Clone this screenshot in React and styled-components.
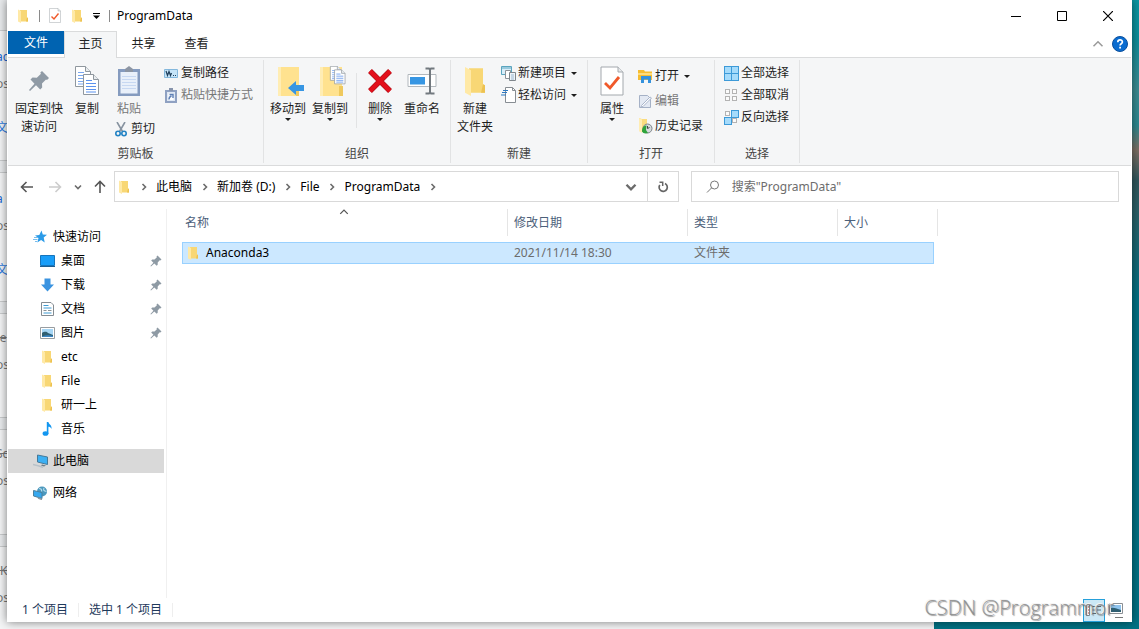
import React from 'react';

import styled, { createGlobalStyle } from 'styled-components';

const GlobalStyle = createGlobalStyle`
	* {
		box-sizing: border-box;
	}
	body {
		margin: 0;
		font-family: 'Noto Sans', 'Noto Sans CJK SC', sans-serif;
		font-size: 12px;
		line-height: 18px;
		color: #000;
	}
	button,
	input {
		font: inherit;
		color: inherit;
		margin: 0;
		padding: 0;
		border: 0;
		background: none;
	}
	a {
		color: inherit;
		text-decoration: none;
	}
	svg {
		display: block;
		flex: none;
	}
`;

/* ---------- desktop ---------- */

const Desktop = styled.div`
	position: relative;
	display: flex;
	min-height: 100vh;
	padding: 0 7px 7px;
	overflow: hidden;
	background: linear-gradient(
		180deg,
		#0a97a3 0,
		#0d8f9b 40px,
		#3d8c92 90px,
		#2d8990 125px,
		#7d6f63 150px,
		#31575d 180px,
		#2b6067 210px,
		#007083 300px,
		#007284 100%
	);
`;

const BackPage = styled.div`
	position: absolute;
	top: 0;
	left: 0;
	bottom: 0;
	width: 82%;
	padding-top: 31px;
	background: #e9ebed;
	overflow: hidden;
`;

const BackCard = styled.div`
	height: ${({ $height }) => $height}px;
	margin-bottom: 13px;
	padding-top: ${({ $tight }) => ($tight ? 14 : 16)}px;
	text-indent: -4px;
	background: #f4f5f6;
	box-shadow: 0 0 0 1px #c9cbcd;
	color: #777;
`;

const BackLine = styled.p`
	margin: 0 0 7px;
	line-height: 20px;
	font-size: 12px;
	color: ${({ $link }) => ($link ? '#1a67d2' : 'inherit')};
	text-decoration: ${({ $struck }) => ($struck ? 'line-through' : 'none')};
`;

const BackTag = styled.p`
	margin: 0;
	padding-top: 17px;
	line-height: 20px;
	font-size: 12px;
	color: #2f7be0;
`;

const Window = styled.main`
	position: relative;
	flex: 1;
	min-width: 0;
	display: flex;
	flex-direction: column;
	background: #fff;
	border: solid #fff;
	border-width: 0 1px;
	box-shadow: 0 0 9px rgba(0, 0, 0, 0.5);
`;

/* ---------- title bar and tabs ---------- */

const TitleBar = styled.header`
	display: flex;
	align-items: center;
	height: 31px;
	padding-left: 3px;
`;

const QuickButton = styled.button`
	display: flex;
	align-items: center;
	justify-content: center;
	width: ${({ $width }) => $width || 22}px;
	height: 22px;
`;

const TitleRule = styled.span`
	width: 1px;
	height: 12px;
	margin: 0 4px;
	background: #8a8a8a;
`;

const Title = styled.h1`
	flex: 1;
	margin: 0 0 0 3px;
	font-size: 12px;
	font-weight: 400;
`;

const CaptionButton = styled.button`
	display: flex;
	align-items: center;
	justify-content: center;
	width: 46px;
	height: 31px;
`;

const TabBar = styled.nav`
	display: flex;
	height: 27px;
	border-bottom: 1px solid #dadbdc;
`;

const FileTab = styled.button`
	width: 56px;
	height: 23px;
	color: #fff;
	background: #0063b1;
`;

const Tab = styled.button`
	width: 53px;
	height: ${({ $active }) => ($active ? 27 : 24)}px;
	padding-bottom: ${({ $active }) => ($active ? 3 : 0)}px;
	color: #222;
	border: solid ${({ $active }) => ($active ? '#dadbdc' : 'transparent')};
	border-width: 1px 1px 0;
	background: ${({ $active }) => ($active ? '#f5f6f7' : 'transparent')};
`;

const TabTools = styled.div`
	display: flex;
	align-items: center;
	gap: 8px;
	margin-left: auto;
	padding-right: 3px;
`;

/* ---------- ribbon ---------- */

const Ribbon = styled.div`
	display: flex;
	height: 108px;
	padding: 2px 0;
	background: #f5f6f7;
	border-bottom: 1px solid #dadbdc;
`;

const Group = styled.section`
	display: flex;
	flex-direction: column;
	flex: 0 0 ${({ $width }) => $width}px;
	border-right: 1px solid #e2e3e4;
`;

const GroupBody = styled.div`
	display: flex;
	flex: 1;
	gap: ${({ $gap }) => $gap || 4}px;
	padding: 2px 0 0 ${({ $start }) => $start || 5}px;
`;

const GroupName = styled.h2`
	margin: 0;
	font-size: 12px;
	font-weight: 400;
	text-align: center;
	color: #444;
`;

const BigButton = styled.button`
	display: flex;
	flex-direction: column;
	align-items: center;
	align-self: flex-start;
	width: ${({ $width }) => $width || 38}px;
	padding-top: 3px;
	color: ${({ disabled }) => (disabled ? '#777' : '#1e1e1e')};
	white-space: pre;
`;

const BigIcon = styled.span`
	display: flex;
	align-items: center;
	justify-content: center;
	height: 35px;
	padding-bottom: 3px;
`;

const Stack = styled.div`
	display: flex;
	flex-direction: column;
	align-items: flex-start;
	gap: ${({ $gap }) => $gap || 0}px;
	padding-top: ${({ $gap }) => $gap || 0}px;
`;

const SmallButton = styled.button`
	display: flex;
	align-items: center;
	gap: 2px;
	height: 22px;
	padding-left: 2px;
	color: ${({ disabled }) => (disabled ? '#777' : '#1e1e1e')};
	white-space: nowrap;
`;

const SmallIcon = styled.span`
	display: flex;
	align-items: center;
	justify-content: center;
	width: 16px;
	height: 16px;
`;

const DownGap = styled.span`
	padding-left: 3px;
`;

const GroupRule = styled.span`
	width: 1px;
	height: 55px;
	margin: 11px 0 0 3px;
	background: #e2e3e4;
`;

/* ---------- address row ---------- */

const AddressRow = styled.div`
	display: flex;
	align-items: center;
	height: 42px;
	padding: 0 12px 1px 5px;
`;

const NavButton = styled.button`
	display: flex;
	align-items: center;
	justify-content: center;
	width: ${({ $narrow }) => ($narrow ? 17 : 28)}px;
	height: 30px;
`;

const AddressBox = styled.div`
	display: flex;
	align-items: center;
	flex: 19 1 0;
	min-width: 0;
	height: 31px;
	margin-right: 12px;
	padding-left: 3px;
	border: 1px solid #d9d9d9;
`;

const Crumbs = styled.nav`
	display: flex;
	align-items: center;
	flex: 1;
	min-width: 0;
	padding-left: 1px;
	white-space: nowrap;
`;

const CrumbArrow = styled.span`
	display: flex;
	justify-content: center;
	width: 25px;
`;

const BoxButton = styled.button`
	display: flex;
	align-items: center;
	justify-content: center;
	width: 31px;
	height: 29px;
	border-left: ${({ $ruled }) => ($ruled ? '1px solid #d9d9d9' : '0')};
`;

const SearchBox = styled.label`
	display: flex;
	align-items: center;
	gap: 12px;
	flex: 14 1 0;
	min-width: 0;
	height: 31px;
	padding-left: 14px;
	border: 1px solid #d9d9d9;
`;

const SearchInput = styled.input`
	flex: 1;
	min-width: 0;
	height: 27px;
	outline: none;
	&::placeholder {
		color: #6d6d6d;
		opacity: 1;
	}
`;

/* ---------- body ---------- */

const Body = styled.div`
	display: flex;
	flex: 1;
	padding-top: 1px;
`;

const Sidebar = styled.nav`
	flex: 0 0 159px;
	padding: 16px 2px 0 0;
	border-right: 1px solid #f0f0f0;
`;

const TreeRow = styled.a`
	display: flex;
	align-items: center;
	gap: ${({ $root }) => ($root ? 4 : 6)}px;
	height: 24px;
	padding: 0 2px 0 ${({ $root }) => ($root ? 25 : 32)}px;
	background: ${({ $selected }) => ($selected ? '#d9d9d9' : 'transparent')};
`;

const TreeLabel = styled.span`
	flex: 1;
`;

const TreeGap = styled.div`
	height: 8px;
`;

const ListPane = styled.div`
	flex: 1;
	min-width: 0;
	padding-left: 15px;
`;

const FileTable = styled.table`
	table-layout: fixed;
	width: 756px;
	max-width: 100%;
	border-collapse: separate;
	border-spacing: 0;
`;

const HeadCell = styled.th`
	position: relative;
	padding: 0 0 6px;
	font-weight: 400;
	text-align: left;
	color: #4c607a;
`;

const HeadLabel = styled.div`
	height: 27px;
	padding-left: ${({ $first }) => ($first ? 3 : 6)}px;
	line-height: 27px;
	border-right: 1px solid #e5e5e5;
`;

const SortMark = styled.span`
	position: absolute;
	top: -2px;
	left: 50%;
	margin-left: -6px;
`;

const Cell = styled.td`
	height: 22px;
	padding: 0 6px;
	color: #6d6d6d;
	background: #cce8ff;
	border: solid #99d1ff;
	border-width: 1px 0;
	line-height: 18px;
	&:last-of-type {
		border-right-width: 1px;
	}
`;

const NameCell = styled(Cell)`
	padding-left: 4px;
	color: #000;
	border-left-width: 1px;
`;

const FileName = styled.span`
	display: flex;
	align-items: center;
	gap: 7px;
`;

/* ---------- status bar ---------- */

const StatusBar = styled.footer`
	display: flex;
	align-items: center;
	height: 24px;
	padding: 0 4px 0 14px;
	color: #1e395b;
`;

const StatusText = styled.span`
	padding-right: 10px;
	margin-right: 10px;
	line-height: 14px;
	border-right: 1px solid #eee;
`;

const Views = styled.div`
	display: flex;
	align-items: center;
	margin-left: auto;
`;

const ViewButton = styled.button`
	display: flex;
	align-items: center;
	justify-content: center;
	width: 22px;
	height: 23px;
	border: 1px solid ${({ $on }) => ($on ? '#26a0da' : 'transparent')};
	background: ${({ $on }) => ($on ? '#cbe8f6' : 'transparent')};
`;

const Watermark = styled.div`
	position: absolute;
	right: 17px;
	bottom: 0;
	font-family: 'Open Sans', 'Noto Sans', sans-serif;
	font-size: 20px;
	font-weight: 300;
	line-height: 28px;
	color: rgba(140, 140, 140, 0.9);
	text-shadow: 1px 1px 1px rgba(90, 90, 90, 0.6), -1px -1px 0 #f4f4f4;
	pointer-events: none;
	white-space: nowrap;
`;

/* ---------- icons ---------- */

const DownMark = () => (
	<svg width="6" height="3" viewBox="0 0 6 3">
		<path d="M0 0h6L3 3z" fill="#1e1e1e" />
	</svg>
);

const FolderShape = () => (
	<>
		<path d="M3 1h7v7.500l1 .5v3.500H3z" fill="#f8d775" />
		<path d="M10 8.500l1 .5v3.500H9z" fill="#edc251" />
		<path d="M1 .5L4 2v12L1 12.500z" fill="#ffe9a6" />
	</>
);

const FolderIcon = ({ width = 12, height = 14 }) => (
	<svg width={width} height={height} viewBox="0 0 12 14" preserveAspectRatio="none">
		<FolderShape />
	</svg>
);

const TreeFolderIcon = () => (
	<svg width="15" height="14" viewBox="-1 0 15 14">
		<FolderShape />
	</svg>
);

const CheckPage = ({ width, height }) => (
	<svg width={width} height={height} viewBox="0 0 24 30">
		<path d="M1 1h17l5 5v23H1z" fill="#fff" stroke="#a3a8ad" />
		<path d="M18 1v5h5" fill="#e7e9eb" stroke="#a3a8ad" />
		<path d="M5 17l5 5 9-11" fill="none" stroke="#f0592a" strokeWidth="2.800" />
	</svg>
);

const PinBig = () => (
	<svg width="22" height="22" viewBox="0 0 22 22">
		<path
			d="M14 1l7 7-2 2-1-.6-4 4.100.2 4-2 2-4.200-4.200L2 21l-1-1 5.500-6.300L2.500 9.500l2-2 4.300.3 4.200-4-.8-1z"
			fill="#8f9aa5"
		/>
	</svg>
);

const PinSmall = () => (
	<svg width="12" height="12" viewBox="0 0 12 12">
		<path
			d="M7.500.5l4 4-1.200 1-.6-.2-2 2.200v2.300l-1 1-2.400-2.400L1 11.500l-.6-.5L3.400 7.700 1.200 5.400l1-1h2.300L6.900 2.300 6.500 1.600z"
			fill="#8e9aa4"
		/>
	</svg>
);

const Sheet = ({ x, y, blue }) => (
	<g transform={`translate(${x} ${y})`}>
		<path d="M.5.5h10l5 5v15H.5z" fill="#fff" stroke="#8f979e" />
		<path d="M10.500.5v5h5" fill="#e9edf0" stroke="#8f979e" />
		<path d="M3 6.500h6M3 9.500h10M3 12.500h10M3 15.500h10M3 18h10" stroke={blue} />
	</g>
);

const CopyIcon = () => (
	<svg width="25" height="30" viewBox="0 0 25 30">
		<Sheet x={0} y={0} blue="#7aa7ee" />
		<Sheet x={8} y={8} blue="#5b92ee" />
	</svg>
);

const PasteIcon = () => (
	<svg width="22" height="30" viewBox="0 0 22 30">
		<path d="M0 3h22v27H0z" fill="#859bbf" />
		<path d="M2.500 6h17v21.500h-17z" fill="#e9f0fa" />
		<path d="M7 3l2-1.500L11 0l2 1.500L15 3v3H7z" fill="#8c95a3" />
		<path d="M4 10.500h14M4 13.500h14M4 16.500h14M4 19.500h14M4 22.500h14" stroke="#c7d8f2" />
	</svg>
);

const ScissorsIcon = () => (
	<svg width="12" height="15" viewBox="0 0 12 15">
		<path d="M2 0l5.500 9.500M10 0L4.500 9.500" stroke="#8793a0" strokeWidth="1.600" />
		<circle cx="3" cy="11.500" r="2.200" fill="none" stroke="#2383c4" strokeWidth="1.600" />
		<circle cx="9" cy="11.500" r="2.200" fill="none" stroke="#2383c4" strokeWidth="1.600" />
	</svg>
);

const PathIcon = () => (
	<svg width="14" height="9" viewBox="0 0 14 9">
		<path d="M.5.5h13v8H.5z" fill="#c5e4f8" stroke="#84b8dd" />
		<path d="M2 2l1.500 4.500L5 2.500l1.500 4L7.500 4M9 6.500h1M11 6.500h1" fill="none" stroke="#1f3f5c" strokeWidth="1.200" />
	</svg>
);

const ShortcutIcon = () => (
	<svg width="12" height="15" viewBox="0 0 12 15">
		<path d="M1 3h10v11H1z" fill="#dfe8f4" stroke="#8fa1c2" strokeWidth="2" />
		<path d="M4 0h4v3H4z" fill="#8794ac" />
		<path d="M3.500 5.500h5v6.500h-5z" fill="#fff" />
		<path d="M4 11.500c0-2 .8-3 2.500-3.500M4.500 6.500H8V10" fill="none" stroke="#5d7fb5" strokeWidth="1.400" />
	</svg>
);

const MoveIcon = () => (
	<svg width="32" height="30" viewBox="-5 0 32 30">
		<path d="M1 1h21v29H1z" fill="#ffe28f" />
		<path d="M1 1h3v29H1z" fill="#ffedb4" />
		<path d="M19 20h3v10h-3z" fill="#efc95e" />
		<path d="M11 22l8-7v4h8v6h-8v4z" fill="#3796e3" />
	</svg>
);

const CopyToIcon = () => (
	<svg width="32" height="30" viewBox="-5 0 32 30">
		<path d="M1 1h22v29H1z" fill="#ffe28f" />
		<path d="M1 1h3v29H1z" fill="#ffedb4" />
		<path d="M20 20h4v10h-4z" fill="#efc95e" />
		<g transform="translate(11 0) scale(.7)">
			<Sheet x={0} y={0} blue="#5b92ee" />
			<Sheet x={6} y={5} blue="#4a86ea" />
		</g>
	</svg>
);

const DeleteIcon = () => (
	<svg width="26" height="26" viewBox="0 0 26 26">
		<path d="M3 3l20 20M23 3L3 23" stroke="#b5121b" strokeWidth="5.500" />
		<path d="M3 3l20 20M23 3L3 23" stroke="#e3101b" strokeWidth="4" />
	</svg>
);

const RenameIcon = () => (
	<svg width="30" height="28" viewBox="0 0 30 28">
		<path d="M1 7.500h28v12H1z" fill="#fff" stroke="#b2b8bd" />
		<path d="M3 10h15v7.500H3z" fill="#3796e3" />
		<path d="M18.500 1.500h3.500l1 1 1-1h3.500M18.500 26.500h3.500l1-1 1 1h3.500M23 2v24" fill="none" stroke="#72797f" strokeWidth="2" />
	</svg>
);

const NewItemIcon = () => (
	<svg width="15" height="15" viewBox="0 0 15 15">
		<path d="M.5.5h10v8H.5z" fill="#d8eefa" stroke="#5aa5bf" />
		<path d="M1 2h9" stroke="#5aa5bf" />
		<path d="M4.500 4.500h5v8h-5z" fill="#fff" stroke="#8c9298" />
		<path d="M8.500 6.500h6v8h-6z" fill="#eef5fb" stroke="#7f868c" />
		<path d="M10 9h3M10 11h3M10 13h3" stroke="#9bb7cf" />
	</svg>
);

const EasyAccessIcon = () => (
	<svg width="15" height="16" viewBox="0 0 15 16">
		<path d="M4.500.5h7l3 3v12h-10z" fill="#fff" stroke="#878d93" />
		<path d="M11.500.5v3h3" fill="none" stroke="#878d93" />
		<path d="M2 3.500h5M1 5.500h5M0 8h5" stroke="#2b78c2" strokeWidth="1.200" />
	</svg>
);

const OpenIcon = () => (
	<svg width="15" height="14" viewBox="0 0 15 14">
		<path d="M0 1h6l1 1.500h7V11H0z" fill="#f6bd31" />
		<path d="M0 4h14v2H0z" fill="#ffdc7a" />
		<path d="M3 14V7h10v7h-3v-3.500H6V14z" fill="#3492dd" />
	</svg>
);

const EditIcon = () => (
	<svg width="14" height="15" viewBox="0 0 14 15">
		<path d="M1.500 1.500h8l3 3v9h-11z" fill="#e3e9f3" stroke="#a5b1c6" />
		<path d="M3.500 11.500L12 3l1.500 1L5 12.500l-2 .5z" fill="#fff" stroke="#a9b5cb" />
	</svg>
);

const HistoryIcon = () => (
	<svg width="15" height="16" viewBox="0 0 15 16">
		<path d="M1 0l3 1h5v13H4l-3-1z" fill="#fbdc7e" />
		<path d="M1 0l3 1.500V15L1 13z" fill="#ffedb4" />
		<circle cx="9.500" cy="10.500" r="4.500" fill="#d7dbde" stroke="#7d8488" />
		<path d="M9.500 8v2.500l2-1" fill="none" stroke="#444" />
		<path d="M4 13.500c0-4 2-6 4.500-6L8 12l2 3c-2.500 1-5 .5-6-1.500z" fill="#2fa33c" />
	</svg>
);

// four tiles; `on` says which ones are filled
const TilesIcon = ({ on }) => (
	<svg width="15" height="15" viewBox="0 0 15 15">
		{[[0, 0], [7, 0], [0, 7], [7, 7]].map(([x, y], i) => (
			<rect
				key={i}
				x={on[i] ? x + 0.5 : x + 1.5}
				y={on[i] ? y + 0.5 : y + 1.5}
				width={on[i] ? 7 : 4}
				height={on[i] ? 7 : 4}
				fill={on[i] ? '#a5dbfb' : '#fbfbfb'}
				stroke={on[i] ? '#3d9ad8' : '#b3b3b3'}
			/>
		))}
	</svg>
);

const Chevron = ({ dir = 'right', color = '#6b6b6b', size = 8, weight = 1.6 }) => {
	const turn = { right: 0, down: 90, up: -90 }[dir];
	return (
		<svg width={size} height={size} viewBox="0 0 8 8">
			<path
				d="M2.500 1l3 3-3 3"
				fill="none"
				stroke={color}
				strokeWidth={weight}
				transform={`rotate(${turn} 4 4)`}
			/>
		</svg>
	);
};

const ArrowIcon = ({ dir, color }) => (
	<svg width="14" height="14" viewBox="0 0 14 14">
		<path
			d="M13 7H2M6.500 2L1.500 7l5 5"
			fill="none"
			stroke={color}
			strokeWidth="1.600"
			transform={`rotate(${{ left: 0, up: 90, right: 180 }[dir]} 7 7)`}
		/>
	</svg>
);

const RefreshIcon = () => (
	<svg width="12" height="12" viewBox="0 0 12 12">
		<path d="M8 2.600a4.100 4.100 0 1 1-5.200 1.400" fill="none" stroke="#666" strokeWidth="1.700" />
		<path d="M2.500 1.300h3.200v3.700" fill="none" stroke="#666" strokeWidth="1.500" />
	</svg>
);

const SearchIcon = () => (
	<svg width="14" height="14" viewBox="0 0 14 14">
		<circle cx="8.500" cy="5" r="4" fill="none" stroke="#777" />
		<path d="M5.700 7.800L1 12.500" stroke="#777" />
	</svg>
);

const StarIcon = () => (
	<svg width="16" height="14" viewBox="0 0 16 14">
		<path d="M8.500.5l1.300 4 4.200.3-3.300 2.700 1 5-3.600-2.600-3.800 2.600 1.200-4.500L2 5.500l4.300-.4z" fill="#2b9be8" />
		<path d="M1 7.500h4M0 9.500h4.500M2 11.500h2" stroke="#79bdec" />
	</svg>
);

const DesktopIcon = () => (
	<svg width="15" height="12" viewBox="0 0 15 12">
		<path d="M.5.5h14v10H.5z" fill="#189df8" stroke="#1674bb" />
		<path d="M0 11.500h15" stroke="#1c5e91" />
	</svg>
);

const DownloadIcon = () => (
	<svg width="15" height="14" viewBox="0 0 15 14">
		<path d="M4.500.5h6v6H14L7.500 13.500 1 6.500h3.500z" fill="#3a93e0" />
	</svg>
);

const DocumentIcon = () => (
	<svg width="15" height="14" viewBox="0 0 15 14">
		<path d="M1.500.5H11l2.500 2.500v10.500h-12z" fill="#fff" stroke="#858c92" />
		<path d="M3.500 3.500h5M3.500 6h8M3.500 11h8" stroke="#3f9bd3" />
		<path d="M3.500 8.500h3M8 8.500h3.500" stroke="#8b9296" />
	</svg>
);

const PictureIcon = () => (
	<svg width="15" height="12" viewBox="0 0 15 12">
		<path d="M.5.5h14v11H.5z" fill="#fff" stroke="#989da1" />
		<path d="M2 2h11v8H2z" fill="#a6d6f5" />
		<path d="M2 6c3-2 5-1 6 0l5 2v2H2z" fill="#2f5f72" />
		<path d="M2 9.500c4-1.500 8-1.500 11-.5v1H2z" fill="#3b86c4" />
	</svg>
);

const MusicIcon = () => (
	<svg width="15" height="14" viewBox="0 0 15 14">
		<ellipse cx="5.500" cy="11.500" rx="2.900" ry="2.300" fill="#1296f0" />
		<path d="M6.800 0h1.600c.3 2.200 3.600 3 3.200 7-1-2-2-2.300-3.200-2.300V12H6.800z" fill="#1296f0" />
	</svg>
);

const ComputerIcon = () => (
	<svg width="16" height="14" viewBox="0 0 16 14">
		<path d="M4.500 1l10 2v7.500L4.500 8z" fill="#3db0f3" stroke="#467a99" />
		<path d="M9 10.500l4 1-2 1-3-1z" fill="#6d7d88" />
		<path d="M0 10.500l6 1.500 4 1.500" fill="none" stroke="#b8c2c9" strokeWidth="1.400" />
	</svg>
);

const NetworkIcon = () => (
	<svg width="16" height="14" viewBox="0 0 16 14">
		<circle cx="9" cy="5.500" r="5" fill="#4c98bd" />
		<path d="M6 2.500c2 0 3 1 2.500 3M11 2c-1 2 0 3 2.500 3.500" stroke="#b5dceb" strokeWidth="1.200" fill="none" />
		<path d="M.5 4.500L9 6.500v6L.5 10z" fill="#35a8ef" stroke="#4c7f9c" />
		<path d="M5 12l4 1.500" stroke="#8a99a3" strokeWidth="1.400" />
	</svg>
);

const DetailsIcon = () => (
	<svg width="16" height="12" viewBox="0 0 16 12">
		<path d="M.5.5h3v11h-3z" fill="#fff" stroke="#7a858d" />
		<path d="M2 3h1M2 6h1M2 9h1" stroke="#c0392b" />
		<path d="M6 2.500h4M11 2.500h4M6 6h4M11 6h4M6 9.500h4M11 9.500h4" stroke="#5a6a76" />
	</svg>
);

const LargeViewIcon = () => (
	<svg width="14" height="15" viewBox="0 0 14 15">
		<path d="M.5.5h13v10H.5z" fill="#fff" stroke="#8a8f94" />
		<path d="M2 2h10v7H2z" fill="#8fc4ee" />
		<path d="M2 5c3-1 6 1 10 2v2H2z" fill="#2f5f72" />
		<path d="M6 14.500h8" stroke="#777" />
	</svg>
);

const HelpIcon = () => (
	<svg width="16" height="16" viewBox="0 0 16 16">
		<circle cx="8" cy="8" r="7.500" fill="#0a6cd0" stroke="#0b4f9c" />
		<path d="M5.800 6.200c0-3 4.600-3 4.600-.2 0 1.700-2.300 1.800-2.300 3.500" fill="none" stroke="#fff" strokeWidth="1.700" />
		<path d="M7.200 10.800H9v1.700H7.200z" fill="#fff" />
	</svg>
);

/* ---------- data ---------- */

const backCards = [
	{ height: 129, title: 'ac', link: true, tag: '文' },
	{ height: 128, title: 'a', link: true, tag: '文' },
	{ height: 103, title: '-e', struck: true },
	{ height: 104, title: 'Sc', struck: true },
	{ height: 104, title: 'IK', struck: true },
];

const quickItems = [
	{ label: '桌面', Icon: DesktopIcon, pinned: true },
	{ label: '下载', Icon: DownloadIcon, pinned: true },
	{ label: '文档', Icon: DocumentIcon, pinned: true },
	{ label: '图片', Icon: PictureIcon, pinned: true },
	{ label: 'etc', Icon: TreeFolderIcon },
	{ label: 'File', Icon: TreeFolderIcon },
	{ label: '研一上', Icon: TreeFolderIcon },
	{ label: '音乐', Icon: MusicIcon },
];

const crumbs = ['此电脑', '新加卷 (D:)', 'File', 'ProgramData'];

const files = [{ name: 'Anaconda3', date: '2021/11/14 18:30', type: '文件夹', size: '' }];

/* ---------- parts ---------- */

const Big = ({ icon, children, menu, ...rest }) => (
	<BigButton {...rest}>
		<BigIcon>{icon}</BigIcon>
		<span>{children}</span>
		{menu && <DownMark />}
	</BigButton>
);

const Small = ({ icon, children, menu, ...rest }) => (
	<SmallButton {...rest}>
		<SmallIcon>{icon}</SmallIcon>
		<span>{children}</span>
		{menu && (
			<DownGap>
				<DownMark />
			</DownGap>
		)}
	</SmallButton>
);

const Tree = ({ label, Icon, pinned, ...rest }) => (
	<TreeRow href="#" {...rest}>
		<Icon />
		<TreeLabel>{label}</TreeLabel>
		{pinned && <PinSmall />}
	</TreeRow>
);

export default function App() {
	return (
		<Desktop>
			<GlobalStyle />
			<BackPage aria-hidden="true">
				{backCards.map((card, i) => (
					<BackCard key={i} $height={card.height} $tight={card.struck}>
						<BackLine $link={card.link} $struck={card.struck}>
							{card.title}
						</BackLine>
						<BackLine>os</BackLine>
						{card.tag && <BackTag>{card.tag}</BackTag>}
					</BackCard>
				))}
			</BackPage>

			<Window>
				<TitleBar>
					<QuickButton $width={24} aria-label="窗口">
						<FolderIcon />
					</QuickButton>
					<TitleRule />
					<QuickButton aria-label="属性">
						<CheckPage width={12} height={15} />
					</QuickButton>
					<QuickButton aria-label="新建文件夹">
						<FolderIcon />
					</QuickButton>
					<QuickButton $width={17} aria-label="自定义">
						<svg width="7" height="6" viewBox="0 0 7 6">
							<path d="M0 .5h7" stroke="#000" />
							<path d="M0 2.500h7L3.500 6z" />
						</svg>
					</QuickButton>
					<TitleRule />
					<Title>ProgramData</Title>
					<CaptionButton aria-label="最小化">
						<svg width="10" height="10" viewBox="0 0 10 10">
							<path d="M0 5.500h10" stroke="#000" />
						</svg>
					</CaptionButton>
					<CaptionButton aria-label="最大化">
						<svg width="10" height="10" viewBox="0 0 10 10">
							<path d="M.5.5h9v9h-9z" fill="none" stroke="#000" />
						</svg>
					</CaptionButton>
					<CaptionButton aria-label="关闭">
						<svg width="10" height="10" viewBox="0 0 10 10">
							<path d="M0 0l10 10M10 0L0 10" stroke="#000" strokeWidth="1.200" />
						</svg>
					</CaptionButton>
				</TitleBar>

				<TabBar>
					<FileTab>文件</FileTab>
					<Tab $active>主页</Tab>
					<Tab>共享</Tab>
					<Tab>查看</Tab>
					<TabTools>
						<button aria-label="折叠功能区">
							<Chevron dir="up" color="#9a9a9a" size={12} weight={1} />
						</button>
						<button aria-label="帮助">
							<HelpIcon />
						</button>
					</TabTools>
				</TabBar>

				<Ribbon>
					<Group $width={256}>
						<GroupBody $start={7} $gap={6}>
							<Big $width={48} icon={<PinBig />}>
								{'固定到快\n速访问'}
							</Big>
							<Big $width={36} icon={<CopyIcon />}>
								复制
							</Big>
							<Stack>
								<Big $width={36} disabled icon={<PasteIcon />}>
									粘贴
								</Big>
								<Small icon={<ScissorsIcon />}>剪切</Small>
							</Stack>
							<Stack>
								<Small icon={<PathIcon />}>复制路径</Small>
								<Small disabled icon={<ShortcutIcon />}>
									粘贴快捷方式
								</Small>
							</Stack>
						</GroupBody>
						<GroupName>剪贴板</GroupName>
					</Group>

					<Group $width={187}>
						<GroupBody>
							<Big menu icon={<MoveIcon />}>
								移动到
							</Big>
							<Big menu icon={<CopyToIcon />}>
								复制到
							</Big>
							<GroupRule />
							<Big menu icon={<DeleteIcon />}>
								删除
							</Big>
							<Big icon={<RenameIcon />}>重命名</Big>
						</GroupBody>
						<GroupName>组织</GroupName>
					</Group>

					<Group $width={137}>
						<GroupBody>
							<Big icon={<FolderIcon width={24} height={30} />}>{'新建\n文件夹'}</Big>
							<Stack>
								<Small menu icon={<NewItemIcon />}>
									新建项目
								</Small>
								<Small menu icon={<EasyAccessIcon />}>
									轻松访问
								</Small>
							</Stack>
						</GroupBody>
						<GroupName>新建</GroupName>
					</Group>

					<Group $width={127}>
						<GroupBody>
							<Big menu icon={<CheckPage width={24} height={30} />}>
								属性
							</Big>
							<Stack $gap={3}>
								<Small menu icon={<OpenIcon />}>
									打开
								</Small>
								<Small disabled icon={<EditIcon />}>
									编辑
								</Small>
								<Small icon={<HistoryIcon />}>历史记录</Small>
							</Stack>
						</GroupBody>
						<GroupName>打开</GroupName>
					</Group>

					<Group $width={85}>
						<GroupBody $start={6}>
							<Stack>
								<Small icon={<TilesIcon on={[1, 1, 1, 1]} />}>全部选择</Small>
								<Small icon={<TilesIcon on={[0, 0, 0, 0]} />}>全部取消</Small>
								<Small icon={<TilesIcon on={[0, 1, 1, 0]} />}>反向选择</Small>
							</Stack>
						</GroupBody>
						<GroupName>选择</GroupName>
					</Group>
				</Ribbon>

				<AddressRow>
					<NavButton aria-label="后退">
						<ArrowIcon dir="left" color="#555" />
					</NavButton>
					<NavButton aria-label="前进" disabled>
						<ArrowIcon dir="right" color="#ccc" />
					</NavButton>
					<NavButton $narrow aria-label="最近浏览的位置">
						<Chevron dir="down" />
					</NavButton>
					<NavButton aria-label="上移">
						<ArrowIcon dir="up" color="#555" />
					</NavButton>
					<AddressBox>
						<FolderIcon />
						<Crumbs>
							{crumbs.map((crumb) => (
								<React.Fragment key={crumb}>
									<CrumbArrow>
										<Chevron />
									</CrumbArrow>
									<a href="#">{crumb}</a>
								</React.Fragment>
							))}
							<CrumbArrow>
								<Chevron />
							</CrumbArrow>
						</Crumbs>
						<BoxButton aria-label="历史位置">
							<Chevron dir="down" size={12} />
						</BoxButton>
						<BoxButton $ruled aria-label="刷新">
							<RefreshIcon />
						</BoxButton>
					</AddressBox>
					<SearchBox>
						<SearchIcon />
						<SearchInput aria-label="搜索" placeholder={'搜索"ProgramData"'} />
					</SearchBox>
				</AddressRow>

				<Body>
					<Sidebar>
						<Tree $root label="快速访问" Icon={StarIcon} />
						{quickItems.map((item) => (
							<Tree key={item.label} {...item} />
						))}
						<TreeGap />
						<Tree $root $selected label="此电脑" Icon={ComputerIcon} />
						<TreeGap />
						<Tree $root label="网络" Icon={NetworkIcon} />
					</Sidebar>
					<ListPane>
						<FileTable>
							<colgroup>
								<col width="326" />
								<col width="180" />
								<col width="150" />
								<col width="96" />
								<col width="4" />
							</colgroup>
							<thead>
								<tr>
									<HeadCell>
										<HeadLabel $first>名称</HeadLabel>
										<SortMark>
											<Chevron dir="up" color="#555" size={10} weight={1} />
										</SortMark>
									</HeadCell>
									<HeadCell>
										<HeadLabel>修改日期</HeadLabel>
									</HeadCell>
									<HeadCell>
										<HeadLabel>类型</HeadLabel>
									</HeadCell>
									<HeadCell colSpan={2}>
										<HeadLabel>大小</HeadLabel>
									</HeadCell>
								</tr>
							</thead>
							<tbody>
								{files.map((file) => (
									<tr key={file.name}>
										<NameCell>
											<FileName>
												<FolderIcon />
												{file.name}
											</FileName>
										</NameCell>
										<Cell>{file.date}</Cell>
										<Cell>{file.type}</Cell>
										<Cell>{file.size}</Cell>
									</tr>
								))}
							</tbody>
						</FileTable>
					</ListPane>
				</Body>

				<StatusBar>
					<StatusText>1 个项目</StatusText>
					<StatusText>选中 1 个项目</StatusText>
					<Views>
						<ViewButton $on aria-label="详细信息">
							<DetailsIcon />
						</ViewButton>
						<ViewButton aria-label="大图标">
							<LargeViewIcon />
						</ViewButton>
					</Views>
				</StatusBar>
				<Watermark>CSDN @Programmor</Watermark>
			</Window>
		</Desktop>
	);
}
